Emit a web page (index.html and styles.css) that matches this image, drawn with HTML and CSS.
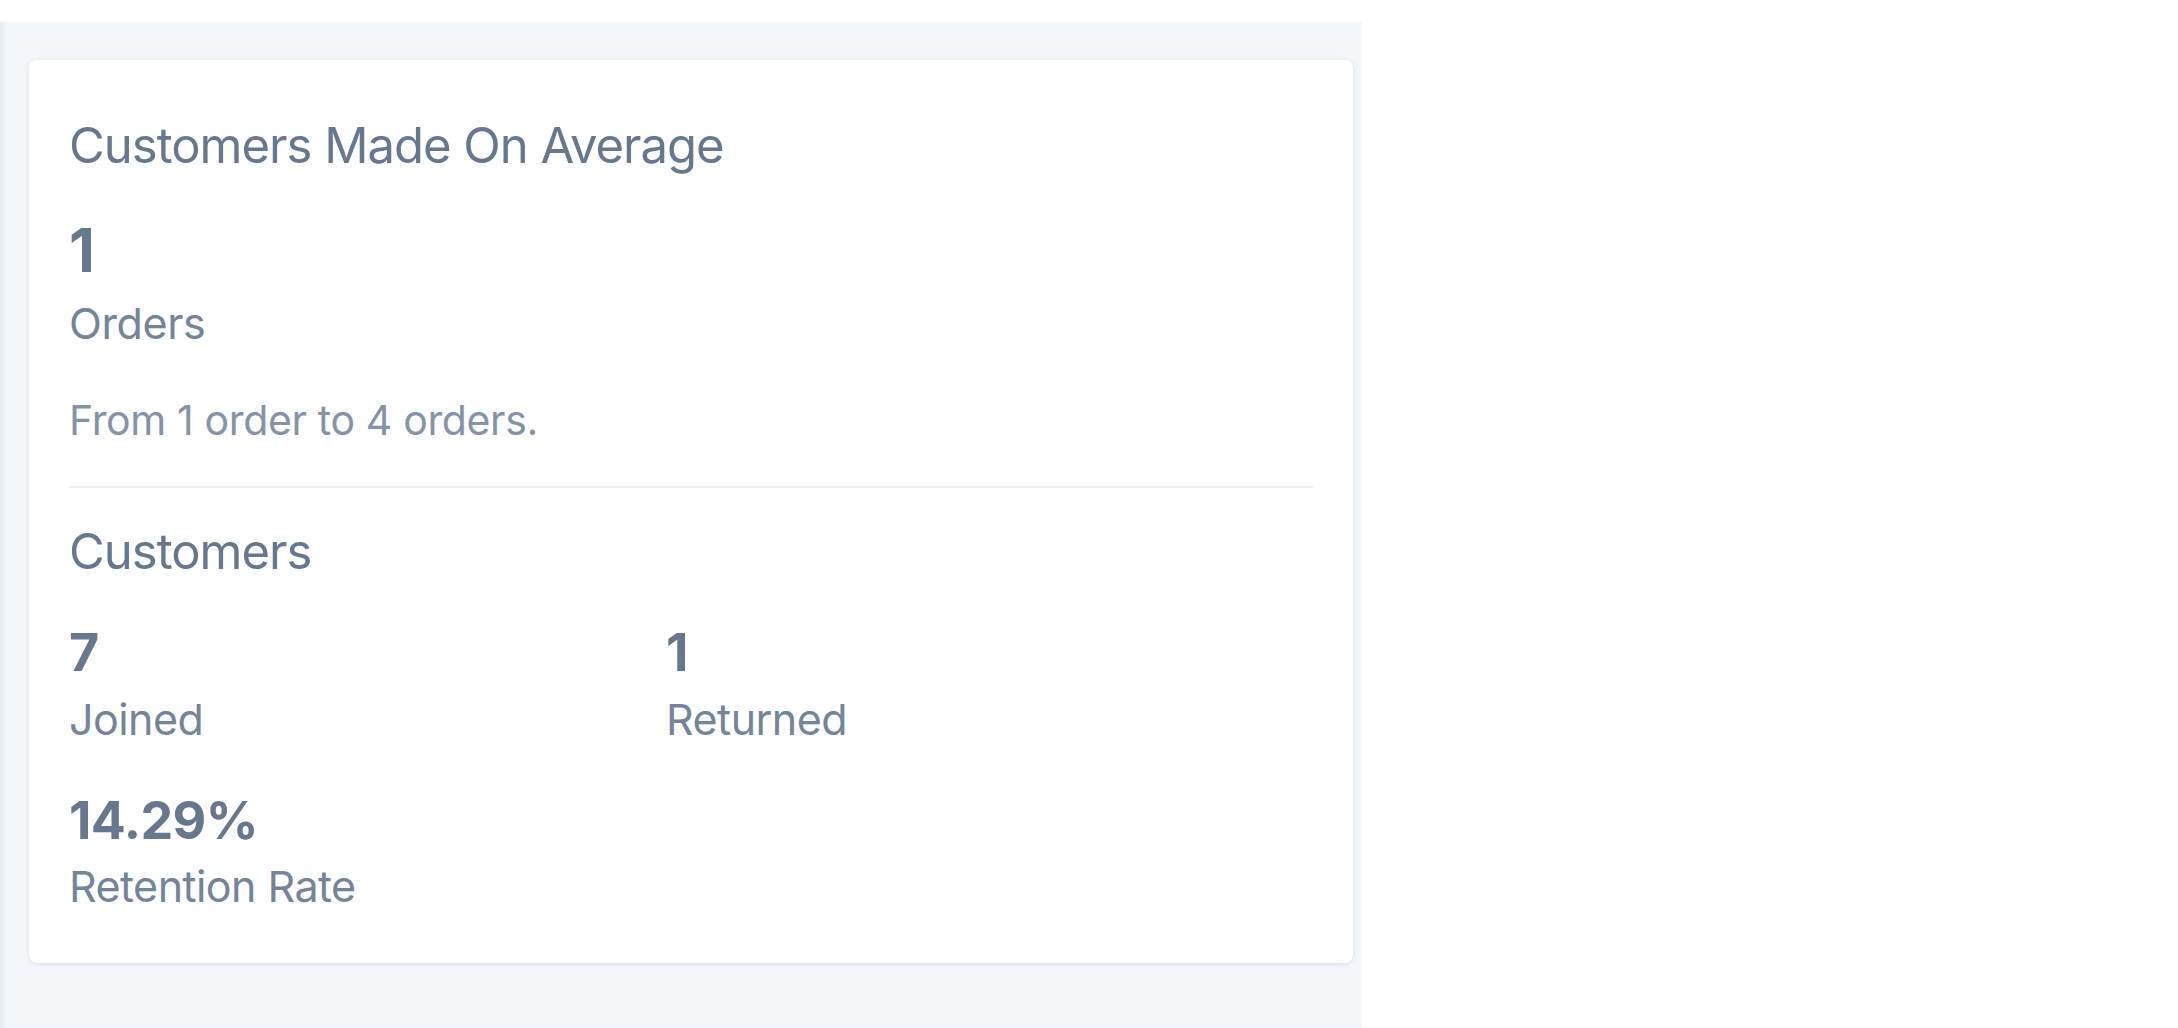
FILE: index.html
```html
<!DOCTYPE html>
<html lang="en">
<head>
<meta charset="utf-8">
<title>Customers Made On Average</title>
<link rel="stylesheet" href="styles.css">
</head>
<body>
<div class="top-strip"></div>
<main class="canvas">
  <section class="card">
    <h2 class="card-title">Customers Made On Average</h2>
    <div class="big-value">1</div>
    <div class="big-label">Orders</div>
    <p class="hint">From 1 order to 4 orders.</p>
    <hr class="divider">
    <h2 class="section-title">Customers</h2>
    <div class="stats-grid">
      <div class="stat">
        <div class="stat-value">7</div>
        <div class="stat-label">Joined</div>
      </div>
      <div class="stat">
        <div class="stat-value">1</div>
        <div class="stat-label">Returned</div>
      </div>
    </div>
    <div class="stat stat-retention">
      <div class="stat-value">14.29%</div>
      <div class="stat-label">Retention Rate</div>
    </div>
  </section>
</main>
</body>
</html>
```

FILE: styles.css
```css
html, body {
  margin: 0;
  padding: 0;
  background: #ffffff;
  font-family: Inter, "Open Sans", "Liberation Sans", sans-serif;
}

.top-strip {
  height: 22px;
}

.canvas {
  width: 1362px;
  height: 1006px;
  box-sizing: border-box;
  background: #f4f7fa;
  padding: 38px 9px 0 29px;
  box-shadow: inset 6px 0 6px -4px rgba(120, 140, 170, 0.14);
}

.card {
  background: #ffffff;
  border-radius: 8px;
  box-shadow: 0 0 7px rgba(110, 130, 160, 0.13), 0 2px 3px rgba(110, 130, 160, 0.08);
  padding: 56px 40px 51px 40px;
  color: #687a92;
}

.card-title,
.section-title {
  margin: 0;
  font-size: 49px;
  line-height: 60px;
  font-weight: 400;
  letter-spacing: -1px;
  color: #66788f;
}

.big-value {
  margin-top: 38px;
  font-size: 60px;
  line-height: 72px;
  font-weight: 700;
  color: #66778e;
}

.big-label {
  margin-top: 11px;
  font-size: 43px;
  line-height: 52px;
  letter-spacing: -0.4px;
  color: #74849a;
}

.hint {
  margin: 46px 0 0 0;
  font-size: 41px;
  line-height: 50px;
  letter-spacing: -0.35px;
  color: #8593a7;
}

.divider {
  margin: 41px 0 0 0;
  border: 0;
  height: 2px;
  background: #eeeff1;
}

.section-title {
  margin-top: 34px;
}

.stats-grid {
  display: grid;
  grid-template-columns: 48% 1fr;
  margin-top: 40px;
}

.stat-value {
  font-size: 52px;
  line-height: 62px;
  font-weight: 700;
  letter-spacing: -0.6px;
  color: #66778e;
}

.stat-label {
  margin-top: 9px;
  font-size: 43px;
  line-height: 52px;
  letter-spacing: -0.55px;
  color: #74849a;
}

.stat-retention {
  margin-top: 45px;
}

.stat-retention .stat-label {
  margin-top: 8px;
}
```
